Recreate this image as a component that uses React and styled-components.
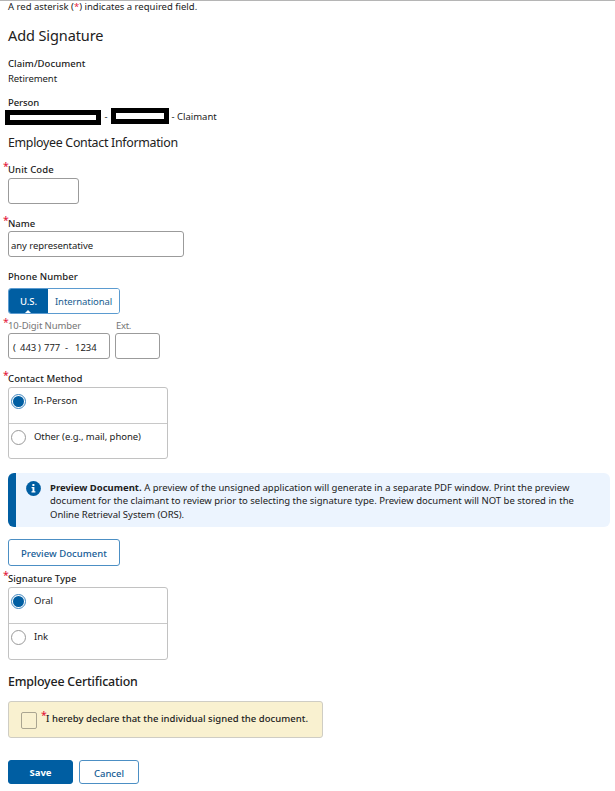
import React from "react";
import styled, { createGlobalStyle } from "styled-components";

const Global = createGlobalStyle`
  * { box-sizing: border-box; }
  body { margin: 0; background: #fff; color: #212121; font: 9.5px/14px "Noto Sans", sans-serif; }
  #root { overflow: hidden; }
`;
const Page = styled.main`
  display: flex;
  flex-direction: column;
  align-items: flex-start;
  width: 615px;
  height: 791px;
  padding: 0 5px 0 8px;
  border-top: 1px solid #b5b5b5;
  white-space: nowrap;
`;
const Line = styled.div`
  height: 14px;
  line-height: 14px;
  margin-top: ${(p) => p.$gap || 0}px;
  font-weight: ${(p) => p.$weight || 400};
  letter-spacing: ${(p) => p.$track || 0}px;
  color: ${(p) => p.$color || "inherit"};
  width: ${(p) => (p.$w ? p.$w + "px" : "auto")};
`;
const Heading = styled.h2`
  margin: ${(p) => p.$gap}px 0 0;
  height: 24px;
  font-size: ${(p) => p.$size}px;
  line-height: 24px;
  font-weight: ${(p) => p.$weight || 400};
  letter-spacing: ${(p) => p.$track || 0}px;
`;
const Row = styled.div`
  display: flex;
  align-items: flex-start;
  gap: ${(p) => p.$space || 0}px;
  margin-top: ${(p) => p.$gap || 0}px;
`;
const Red = styled.span`
  color: #e31c3d;
`;
const Star = styled.span`
  display: inline-block;
  width: 5px;
  margin-left: -5px;
  color: #e31c3d;
  font-size: 10.5px;
  line-height: 0;
  vertical-align: 3px;
  letter-spacing: 0;
`;
const PersonRow = styled.div`
  display: flex;
  align-items: center;
  height: 17px;
  margin: -2px 0 0 -3px;
`;
const Redacted = styled.span`
  width: ${(p) => p.$w}px;
  height: ${(p) => p.$h}px;
  margin-top: ${(p) => p.$drop || 0}px;
  border: 5px solid #000;
`;
const Dash = styled.span`
  width: 10px;
  text-align: center;
`;
const Field = styled.input`
  display: block;
  width: ${(p) => p.$w}px;
  height: 26px;
  margin: 0;
  margin-top: ${(p) => p.$gap || 0}px;
  padding: 2px 2px 0;
  border: 1px solid #9b9b9b;
  border-radius: 3px;
  background: #fff;
  color: #212121;
  font: 9.5px "Noto Sans", sans-serif;
  letter-spacing: ${(p) => p.$track || 0}px;
  outline: none;
`;
const PhoneField = styled.div`
  display: flex;
  align-items: center;
  width: 102px;
  height: 26px;
  padding: 3px 0 0 4px;
  border: 1px solid #9b9b9b;
  border-radius: 3px;
`;
const Digits = styled.span`
  width: ${(p) => p.$w}px;
`;
const Toggle = styled.div`
  display: flex;
  width: 112px;
  height: 26px;
  margin-top: 4px;
  border: 1px solid #5b9bd0;
  border-radius: 3px;
  overflow: hidden;
`;
const ToggleItem = styled.button`
  position: relative;
  width: ${(p) => p.$w}px;
  margin: 0;
  padding: 1px 0 0;
  border: 0;
  background: ${(p) => (p.$on ? "#005ea2" : "#fff")};
  color: ${(p) => (p.$on ? "#fff" : "#205d90")};
  font: ${(p) => (p.$on ? 500 : 400)} 9.5px "Noto Sans", sans-serif;
  letter-spacing: ${(p) => p.$track || 0}px;
`;
const Pointer = styled.i`
  position: absolute;
  left: 16px;
  bottom: 0;
  border: 3px solid transparent;
  border-top-width: 0;
  border-bottom-color: #fff;
`;
const Choices = styled.div`
  width: 160px;
  height: ${(p) => p.$h}px;
  margin-top: ${(p) => p.$gap}px;
  border: 1px solid #c2c2c2;
  border-radius: 3px;
`;
const Choice = styled.label`
  display: flex;
  gap: 8px;
  height: 35px;
  padding: 6px 0 0 2px;
  line-height: 14px;
  letter-spacing: ${(p) => p.$track || 0}px;
  & + & { border-top: 1px solid #c8c8c8; }
`;
const Radio = styled.span`
  display: flex;
  align-items: center;
  justify-content: center;
  width: 15px;
  height: 15px;
  flex: none;
  border: 1px solid ${(p) => (p.$on ? "#3f86bf" : "#999")};
  border-radius: 50%;
  &::after {
    content: "";
    width: 11px;
    height: 11px;
    border-radius: 50%;
    background: ${(p) => (p.$on ? "#005ea2" : "#fff")};
  }
`;
const Alert = styled.section`
  display: flex;
  width: 602px;
  height: 54px;
  margin-top: 14px;
  padding: 8px 0 0 10px;
  border-left: 8px solid #005ea2;
  border-radius: 6px;
  background: #ecf4fe;
`;
const AlertText = styled.div`
  margin-left: 9px;
  line-height: 13.4px;
  font-size: 9.5px;
`;
const AlertLine = styled.div`
  letter-spacing: ${(p) => p.$track || 0}px;
`;
const Button = styled.button`
  width: ${(p) => p.$w}px;
  height: ${(p) => p.$h}px;
  margin: 0;
  margin-top: ${(p) => p.$gap || 0}px;
  padding: ${(p) => p.$drop || 0}px 0 0;
  border: 1px solid ${(p) => (p.$solid ? "#005ea2" : "#4c8fc4")};
  border-radius: 3px;
  background: ${(p) => (p.$solid ? "#005ea2" : "#fff")};
  color: ${(p) => (p.$solid ? "#fff" : "#155c95")};
  font: ${(p) => (p.$solid ? 700 : 500)} 9.5px "Noto Sans", sans-serif;
  letter-spacing: ${(p) => p.$track || 0}px;
`;
const Declaration = styled.label`
  display: flex;
  width: 315px;
  height: 37px;
  margin-top: 7px;
  padding: 10px 0 0 12px;
  border: 1px solid #cfcdc4;
  border-radius: 3px;
  background: #f9f1d0;
`;
const Checkbox = styled.span`
  width: 16px;
  height: 17px;
  margin-right: 9px;
  border: 1px solid #aaa591;
  border-radius: 2px;
`;

const InfoIcon = () => (
  <svg width="15" height="15" viewBox="0 0 15 15">
    <circle cx="7.5" cy="7.5" r="7.4" fill="#005ea2" />
    <path d="M6.4 3h2v2h-2zM5.6 6h2.8v4.3h1v1.3H5.5v-1.3h1V7.3h-.9z" fill="#fff" />
  </svg>
);

export default function App() {
  return (
    <Page>
      <Global />
      <Line $gap={-1}>A red asterisk (<Red>*</Red>) indicates a required field.</Line>
      <Heading $gap={9} $size={14.5} $track={-0.1}>Add Signature</Heading>
      <Line $gap={10} $weight={500} $track={0.06}>Claim/Document</Line>
      <Line $gap={1} $track={-0.08}>Retirement</Line>
      <Line $gap={10} $weight={500} $track={-0.1}>Person</Line>
      <PersonRow>
        <Redacted $w={96} $h={15} $drop={1} />
        <Dash>-</Dash>
        <Redacted $w={58} $h={16} $drop={-1} />
        <Line $gap={1}>&nbsp;- Claimant</Line>
      </PersonRow>
      <Heading $gap={6} $size={12.4} $track={-0.3}>Employee Contact Information</Heading>

      <Line $gap={8} $weight={500} $track={0.1}><Star>*</Star>Unit Code</Line>
      <Field $w={71} $gap={1} aria-label="Unit Code" />
      <Line $gap={13} $weight={500}><Star>*</Star>Name</Line>
      <Field $w={176} $track={-0.06} defaultValue="any representative" aria-label="Name" />

      <Line $gap={13} $weight={500} $track={0.06}>Phone Number</Line>
      <Toggle>
        <ToggleItem $w={39} $on $track={-0.05}>U.S.<Pointer /></ToggleItem>
        <ToggleItem $w={71} $track={-0.1}>International</ToggleItem>
      </Toggle>
      <Row $gap={5}>
        <Line $w={108} $color="#767676" $track={-0.1}><Star>*</Star>10-Digit Number</Line>
        <Line $color="#767676" $track={-0.3}>Ext.</Line>
      </Row>
      <Row $space={5}>
        <PhoneField>
          <Digits $w={7}>(</Digits>
          <Digits $w={18}>443</Digits>
          <Digits $w={6}>)</Digits>
          <Digits $w={21}>777</Digits>
          <Digits $w={10}>-</Digits>
          <Digits $w={26}>1234</Digits>
        </PhoneField>
        <Field $w={45} aria-label="Extension" />
      </Row>

      <Line $gap={13} $weight={500} $track={0.1}><Star>*</Star>Contact Method</Line>
      <Choices $h={72} $gap={1}>
        <Choice><Radio $on />In-Person</Choice>
        <Choice $track={-0.06}><Radio />Other (e.g., mail, phone)</Choice>
      </Choices>

      <Alert>
        <InfoIcon />
        <AlertText>
          <AlertLine><b>Preview Document.</b> A preview of the unsigned application will generate in a separate PDF window. Print the preview</AlertLine>
          <AlertLine>document for the claimant to review prior to selecting the signature type. Preview document will NOT be stored in the</AlertLine>
          <AlertLine $track={-0.02}>Online Retrieval System (ORS).</AlertLine>
        </AlertText>
      </Alert>

      <Button $w={112} $h={27} $gap={12} $drop={1} $track={0.05}>Preview Document</Button>
      <Line $gap={6} $weight={500} $track={0.04}><Star>*</Star>Signature Type</Line>
      <Choices $h={73} $gap={1}>
        <Choice><Radio $on />Oral</Choice>
        <Choice><Radio />Ink</Choice>
      </Choices>

      <Heading $gap={10} $size={12.4} $weight={500} $track={-0.18}>Employee Certification</Heading>
      <Declaration>
        <Checkbox />
        <Line $weight={500} $track={0.03}><Star>*</Star>I hereby declare that the individual signed the document.</Line>
      </Declaration>

      <Row $gap={22} $space={6}>
        <Button $w={65} $h={24} $solid>Save</Button>
        <Button $w={60} $h={24} $drop={2}>Cancel</Button>
      </Row>
    </Page>
  );
}
